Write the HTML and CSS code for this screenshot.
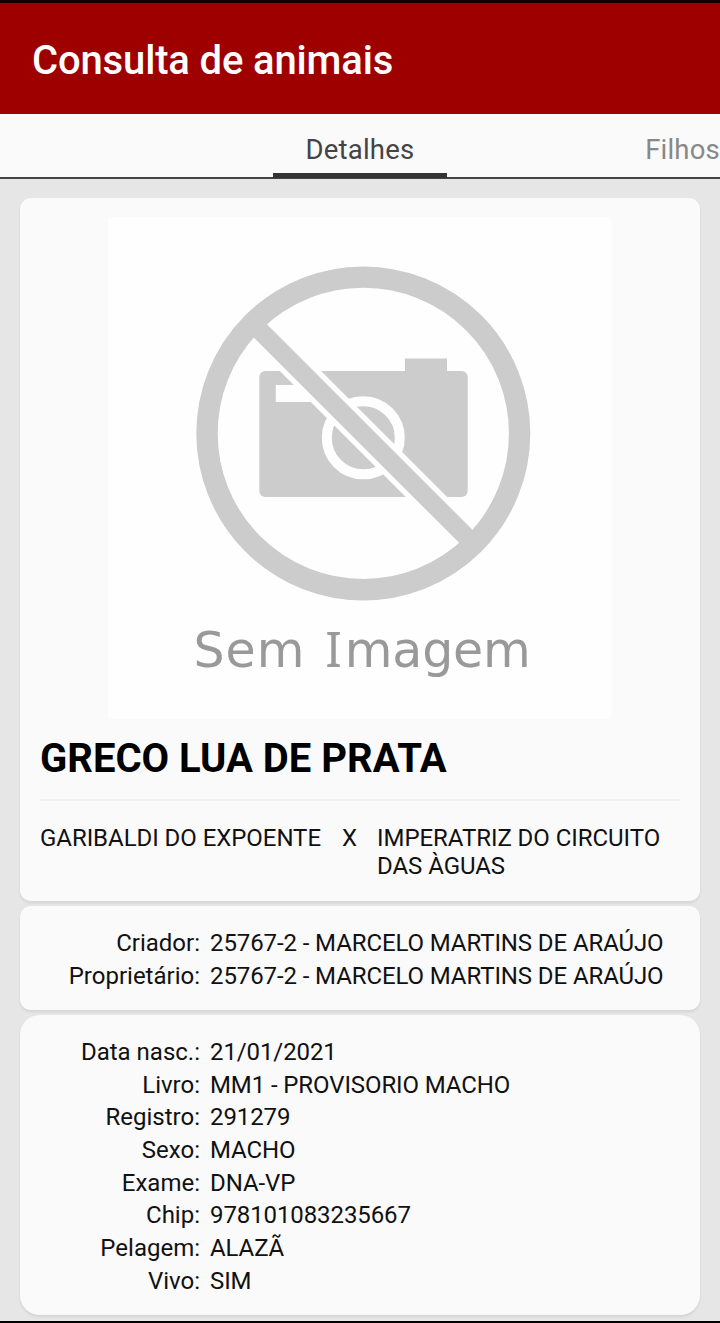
FILE: index.html
```html
<!DOCTYPE html>
<html lang="pt-BR">
<head>
    <meta charset="UTF-8">
    <title>Consulta de animais</title>
    <link rel="stylesheet" href="styles.css">
</head>
<body>

<header class="topbar">
    <h1>Consulta de animais</h1>
</header>

<nav class="tabs">
    <span class="tab active">Detalhes</span>
    <span class="tab next">Filhos</span>
</nav>

<main class="content">
    <section class="card animal">
        <svg class="photo" viewBox="108 217 503 502">
            <rect x="108" y="217" width="503" height="502" fill="#fefefe"/>
            <!-- câmera -->
            <rect x="259.3" y="371" width="208.4" height="126" rx="6" fill="#ccc"/>
            <rect x="405" y="358.5" width="42" height="16" fill="#ccc"/>
            <rect x="275.8" y="385" width="45" height="17" fill="#fefefe"/>
            <circle cx="363.3" cy="437.8" r="36.5" fill="none" stroke="#fefefe" stroke-width="10"/>
            <!-- sinal de proibido -->
            <path d="M262 332.5L466 536.5" stroke="#fefefe" stroke-width="29.3"/>
            <path d="M252 322.5L476 546.5" stroke="#ccc" stroke-width="18.7"/>
            <circle cx="363.3" cy="433.4" r="156.3" fill="none" stroke="#ccc" stroke-width="21.4"/>
            <g class="photo-text">
                <text x="193.5" y="667" textLength="111">Sem</text>
                <text class="serif-i" x="325.3" y="667">I</text>
                <text x="344.8" y="667" textLength="186">magem</text>
            </g>
        </svg>
        <h2>GRECO LUA DE PRATA</h2>
        <div class="parents">
            <span>GARIBALDI DO EXPOENTE</span>
            <span class="x">X</span>
            <span class="mother">IMPERATRIZ DO CIRCUITO DAS ÀGUAS</span>
        </div>
    </section>

    <section class="card owners">
        <dl class="fields">
            <dt>Criador:</dt><dd>25767-2 - MARCELO MARTINS DE ARAÚJO</dd>
            <dt>Proprietário:</dt><dd>25767-2 - MARCELO MARTINS DE ARAÚJO</dd>
        </dl>
    </section>

    <section class="card details">
        <dl class="fields">
            <dt>Data nasc.:</dt><dd>21/01/2021</dd>
            <dt>Livro:</dt><dd>MM1 - PROVISORIO MACHO</dd>
            <dt>Registro:</dt><dd>291279</dd>
            <dt>Sexo:</dt><dd>MACHO</dd>
            <dt>Exame:</dt><dd>DNA-VP</dd>
            <dt>Chip:</dt><dd>978101083235667</dd>
            <dt>Pelagem:</dt><dd>ALAZÃ</dd>
            <dt>Vivo:</dt><dd>SIM</dd>
        </dl>
    </section>
</main>

</body>
</html>
```
FILE: styles.css
```css
* { box-sizing: border-box; }
body {
    margin: 0;
    height: 1323px;
    display: flex;
    flex-direction: column;
    overflow: hidden;
    font-family: Roboto, sans-serif;
    font-size: 24px;
    color: #111;
    background: #e6e6e6;
    border-top: 3px solid #100000;
    border-bottom: 2px solid #000;
}
h1, h2, dl, dd { margin: 0; }
.topbar {
    height: 111px;
    padding: 34px 32px 0;
    background: #9e0000;
}
.topbar h1 {
    font-size: 40px;
    line-height: 48px;
    font-weight: 500;
    letter-spacing: -0.15px;
    color: #fff;
}
.tabs {
    height: 65px;
    display: grid;
    grid-template-columns: 273px 174px 1fr;
    background: #fafafa;
    border-bottom: 2px solid #444;
    font-size: 27.5px;
    line-height: 71px;
}
.tab {
    white-space: nowrap;
    letter-spacing: 0.2px;
}
.tab.active {
    grid-column: 2;
    height: 64px;
    text-align: center;
    color: #444;
    border-bottom: 5px solid #333;
}
.tab.next {
    height: 63px;
    text-align: right;
    color: #888;
}
.content {
    display: flex;
    flex-direction: column;
    gap: 5px;
    padding: 19px 20px 0;
}
.card {
    padding: 0 20px;
    background: #fafafa;
    border-radius: 11px;
    box-shadow: 0 2px 3px rgba(0, 0, 0, 0.08);
}
.animal { height: 703px; padding-top: 19px; }
.photo {
    display: block;
    width: 503px;
    height: 502px;
    margin-left: 68px;
}
.photo-text {
    font-family: "DejaVu Sans", sans-serif;
    font-size: 49px;
    fill: #999;
}
/* o "I" com serifa */
.serif-i { font-family: "Noto Sans", sans-serif; }
.animal h2 {
    height: 82px;
    padding-top: 15px;
    font-size: 40px;
    line-height: 49px;
    font-weight: 700;
    color: #000;
    border-bottom: 2px solid #f1f1f1;
}
.parents {
    display: grid;
    grid-template-columns: 302px 35px 1fr;
    padding-top: 23px;
    line-height: 28px;
    letter-spacing: -0.05px;
}
.parents .mother { width: 290px; }
.owners { height: 104px; padding-top: 21px; }
.details { height: 300px; padding-top: 21px; border-radius: 20px; }
.fields {
    display: grid;
    grid-template-columns: 160px 1fr;
    column-gap: 10px;
    grid-auto-rows: 32.7px;
    line-height: 33.5px;
    white-space: nowrap;
}
.fields dt { text-align: right; }
.fields dd { letter-spacing: -0.1px; }
```
